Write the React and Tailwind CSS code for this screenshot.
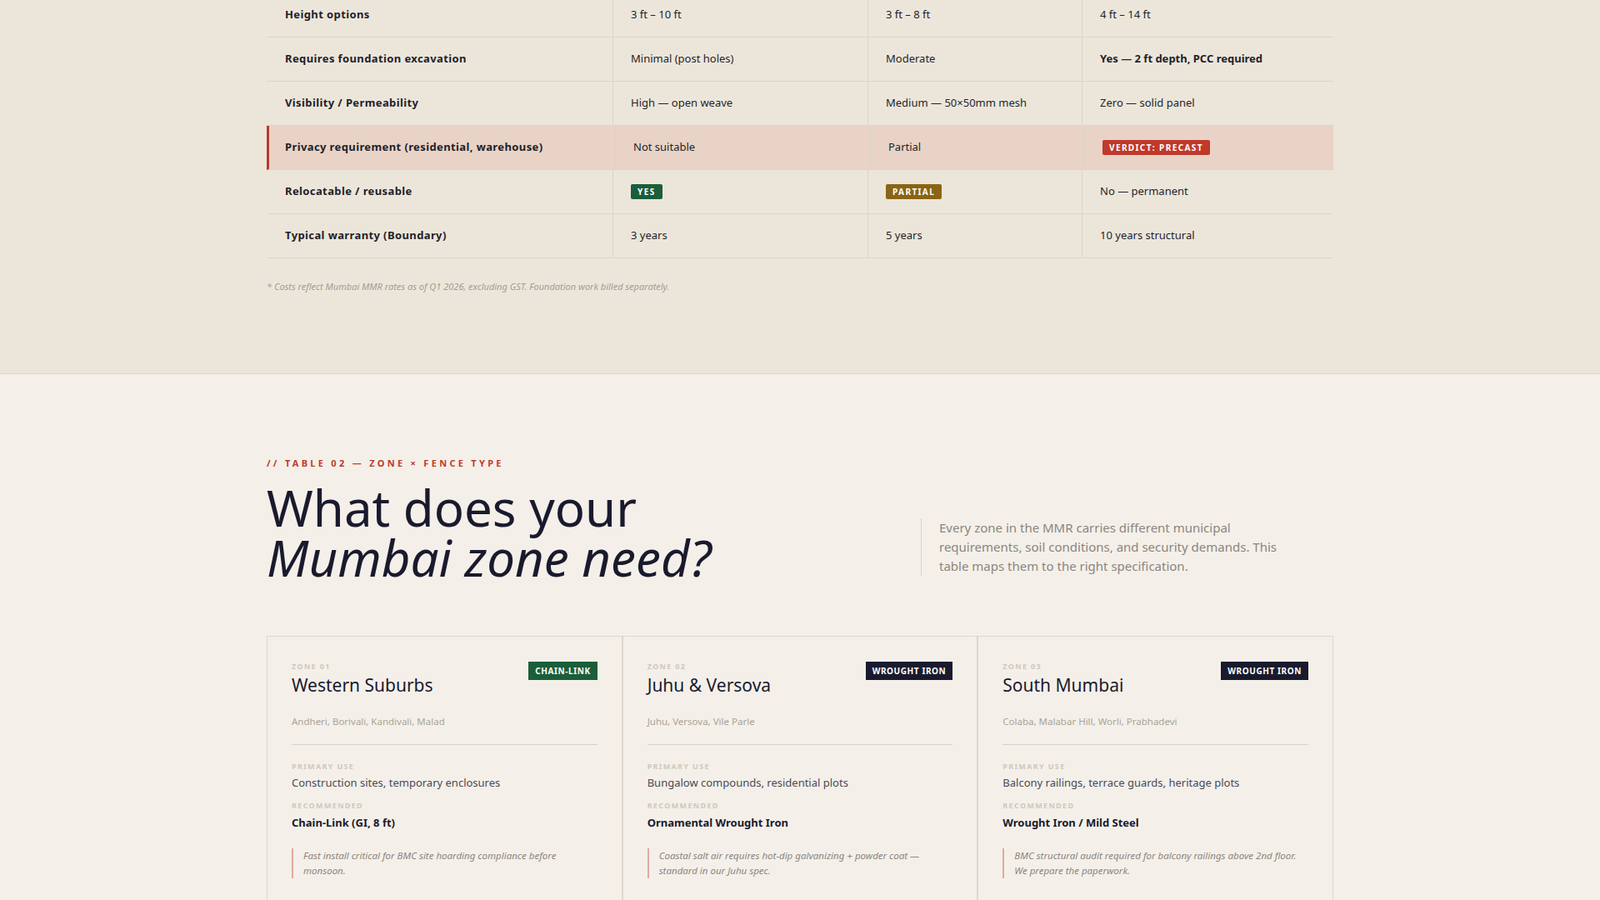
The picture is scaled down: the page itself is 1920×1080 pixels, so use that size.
const rows = [
  { label: 'Height options', a: '3 ft – 10 ft', b: '3 ft – 8 ft', c: '4 ft – 14 ft' },
  { label: 'Requires foundation excavation', a: 'Minimal (post holes)', b: 'Moderate', c: <span className="font-bold">Yes — 2 ft depth, PCC required</span> },
  { label: 'Visibility / Permeability', a: 'High — open weave', b: 'Medium — 50×50mm mesh', c: 'Zero — solid panel' },
  { label: 'Privacy requirement (residential, warehouse)', a: 'Not suitable', b: 'Partial', c: <Badge cls="bg-[#c0392b]">Verdict: Precast</Badge>, hl: true },
  { label: 'Relocatable / reusable', a: <Badge cls="bg-[#1b5e3a]">Yes</Badge>, b: <Badge cls="bg-[#8a6414]">Partial</Badge>, c: 'No — permanent' },
  { label: 'Typical warranty (Boundary)', a: '3 years', b: '5 years', c: '10 years structural' },
]

function Badge({ cls, children }) {
  return (
    <span className={`${cls} inline-block rounded-[2px] px-[8px] py-[4px] text-[10px] font-bold uppercase leading-none tracking-[0.14em] text-white`}>
      {children}
    </span>
  )
}

const zones = [
  { n: '01', name: 'Western Suburbs', tag: 'Chain-Link', tagCls: 'bg-[#1b5e3a]', areas: 'Andheri, Borivali, Kandivali, Malad', use: 'Construction sites, temporary enclosures', rec: 'Chain-Link (GI, 8 ft)', note: 'Fast install critical for BMC site hoarding compliance before monsoon.' },
  { n: '02', name: 'Juhu & Versova', tag: 'Wrought Iron', tagCls: 'bg-[#1a1a2e]', areas: 'Juhu, Versova, Vile Parle', use: 'Bungalow compounds, residential plots', rec: 'Ornamental Wrought Iron', note: 'Coastal salt air requires hot-dip galvanizing + powder coat — standard in our Juhu spec.' },
  { n: '03', name: 'South Mumbai', tag: 'Wrought Iron', tagCls: 'bg-[#1a1a2e]', areas: 'Colaba, Malabar Hill, Worli, Prabhadevi', use: 'Balcony railings, terrace guards, heritage plots', rec: 'Wrought Iron / Mild Steel', note: 'BMC structural audit required for balcony railings above 2nd floor. We prepare the paperwork.' },
]

const serif = "font-[family-name:'Liberation_Serif',serif]"

function ZoneCard({ z }) {
  return (
    <div className="border-[1.5px] border-[#ddd6cc] px-[29px] pt-[29px] pb-[26px]">
      <div className="flex items-start justify-between">
        <div>
          <div className="text-[9px] font-bold uppercase tracking-[0.15em] text-[#cfc8bd]">Zone {z.n}</div>
          <div className={`${serif} mt-[3px] text-[21px] leading-tight text-[#1a1a2e]`}>{z.name}</div>
        </div>
        <span className={`${z.tagCls} mt-[1px] px-[8px] py-[6px] text-[10px] font-bold uppercase leading-none tracking-[0.06em] text-white`}>{z.tag}</span>
      </div>
      <div className="mt-[22px] text-[11.5px] text-[#aaa398]">{z.areas}</div>
      <div className="mt-[18px] border-t border-[#d8d1c6]" />
      <div className="mt-[19px] text-[9px] font-bold uppercase tracking-[0.15em] text-[#cfc8bd]">Primary use</div>
      <div className="mt-[4px] text-[13px] text-[#4a4a55]">{z.use}</div>
      <div className="mt-[10px] text-[9px] font-bold uppercase tracking-[0.15em] text-[#cfc8bd]">Recommended</div>
      <div className="mt-[5px] text-[13px] font-bold text-[#1a1a2e]">{z.rec}</div>
      <div className="mt-[20px] border-l-2 border-[#e0a9a0] pl-[12px] text-[11.5px] italic leading-[18px] text-[#8a8580]">{z.note}</div>
    </div>
  )
}

export default function App() {
  return (
    <div className="min-h-screen overflow-hidden bg-[#f4f0e9] font-[family-name:'Liberation_Sans',Arial,sans-serif]">
      <section className="flow-root h-[449px] border-b border-[#ddd6cc] bg-[#ece6da]">
        <div className="mx-auto -mt-[8px] w-[1280px]">
          {rows.map((r, i) => (
            <div key={i} className={`grid h-[53px] grid-cols-[416px_306px_257px_301px] border-b border-[#dcd4c7] text-[13px] text-[#1f1f2a] ${r.hl ? 'border-l-[3px] border-l-[#b83a2d] bg-[#e8d3c6]' : ''}`}>
              <div className={`flex items-center border-r border-[#dcd4c7] font-bold tracking-[0.03em] ${r.hl ? 'pl-[19px]' : 'pl-[22px]'}`}>{r.label}</div>
              <div className="flex items-center border-r border-[#dcd4c7] pl-[21px]">{r.a}</div>
              <div className="flex items-center border-r border-[#dcd4c7] pl-[21px]">{r.b}</div>
              <div className="flex items-center pl-[21px]">{r.c}</div>
            </div>
          ))}
          <p className="mt-[26px] text-[11px] italic text-[#a39d92]">* Costs reflect Mumbai MMR rates as of Q1 2026, excluding GST. Foundation work billed separately.</p>
        </div>
      </section>
      <section className="mx-auto w-[1280px] pt-[99px]">
        <div className="text-[11px] font-bold uppercase tracking-[0.3em] text-[#c0392b]">// Table 02 — Zone × Fence Type</div>
        <div className="mt-[14px] flex items-end justify-between">
          <h2 className={`${serif} text-[60px] font-normal leading-[1.0] text-[#1a1a2e]`}>
            What does your<br /><em>Mumbai zone need?</em>
          </h2>
          <p className="mr-[52px] mb-[8px] w-[443px] border-l border-[#d8d1c6] pl-[21px] text-[15px] leading-[23px] text-[#8a8580]">
            Every zone in the MMR carries different municipal requirements, soil conditions, and security demands. This table maps them to the right specification.
          </p>
        </div>
        <div className="mt-[64px] grid grid-cols-3">
          {zones.map((z) => <ZoneCard key={z.n} z={z} />)}
          <div className="h-[60px] border-[1.5px] border-[#ddd6cc]" />
          <div className="h-[60px] border-[1.5px] border-[#ddd6cc]" />
          <div className="h-[60px] border-[1.5px] border-[#ddd6cc]" />
        </div>
      </section>
    </div>
  )
}
